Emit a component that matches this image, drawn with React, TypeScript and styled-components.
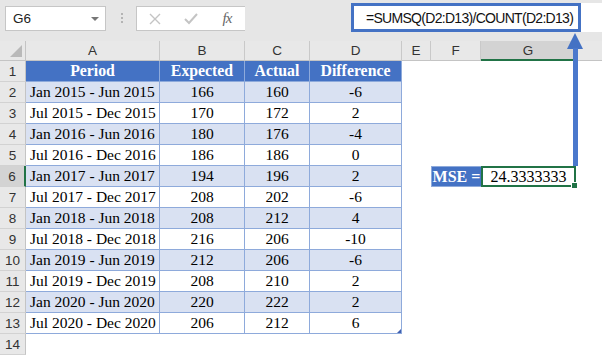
import React from 'react';
import styled, { createGlobalStyle, css } from 'styled-components';

const GlobalStyle = createGlobalStyle`
    html, body {
        margin: 0;
        padding: 0;
        background: #ffffff;
    }
    body {
        font-family: "Liberation Sans", Arial, sans-serif;
    }
`;

const SERIF = '"Times New Roman", "Liberation Serif", "DejaVu Serif", serif';
const BLUE = '#4472c4';
const LIGHT_BLUE = '#d9e1f2';
const TABLE_LINE = '#8eaadb';
const GREEN = '#217346';
const HEAD_BG = '#e8e8e8';

const Frame = styled.div`
    position: relative;
    width: 602px;
    height: 355px;
    overflow: hidden;
    background: #ffffff;
`;

const Toolbar = styled.div`
    display: flex;
    align-items: flex-start;
    height: 41px;
    background: #e6e6e6;
`;

const NameBox = styled.div`
    display: flex;
    align-items: center;
    justify-content: space-between;
    box-sizing: border-box;
    width: 101px;
    height: 25px;
    margin: 6px 0 0 5px;
    padding: 0 6px 0 7px;
    background: #ffffff;
    border: 1px solid #c6c6c6;
    font-size: 13.5px;
    color: #222;
`;

const Caret = styled.span`
    width: 0;
    height: 0;
    border-left: 4px solid transparent;
    border-right: 4px solid transparent;
    border-top: 4px solid #777;
`;

const Grip = styled.div`
    display: flex;
    flex-direction: column;
    gap: 2px;
    margin: 13px 0 0 15px;

    span {
        width: 2px;
        height: 2px;
        background: #b4b4b4;
    }
`;

const FuncBox = styled.div`
    display: flex;
    align-items: center;
    box-sizing: border-box;
    width: 109px;
    height: 25px;
    margin: 6px 0 0 13px;
    background: #ffffff;
    border: 1px solid #c6c6c6;
    border-right: none;
`;

const FuncIcon = styled.span<{ $dark?: boolean }>`
    display: flex;
    align-items: center;
    justify-content: center;
    width: 36px;
    color: ${(p) => (p.$dark ? '#666' : '#c4c4c4')};
`;

const Fx = styled.span`
    font-family: ${SERIF};
    font-style: italic;
    font-size: 15px;
    color: #666;
    letter-spacing: -1px;
`;

const FormulaBox = styled.div`
    display: flex;
    align-items: center;
    box-sizing: border-box;
    width: 230px;
    height: 29px;
    margin: 3px 0 0 106px;
    padding-left: 12px;
    background: #ffffff;
    border: 3px solid ${BLUE};
    font-size: 14px;
    letter-spacing: -0.7px;
    color: #111;
    white-space: nowrap;
`;

const FormulaRest = styled.div`
    flex: 1;
    height: 29px;
    margin-top: 3px;
    background: #ffffff;
`;

const Sheet = styled.div`
    display: grid;
    grid-template-columns: 26px 134px 85px 65px 92px 29px 50px 95px 64px;
    grid-template-rows: 20px repeat(14, 21px);
`;

const Corner = styled.div`
    position: relative;
    box-sizing: border-box;
    background: ${HEAD_BG};
    border-right: 1px solid #c4c4c4;
    border-bottom: 1px solid #c4c4c4;

    &::after {
        content: '';
        position: absolute;
        right: 3px;
        bottom: 3px;
        width: 0;
        height: 0;
        border-left: 12px solid transparent;
        border-bottom: 12px solid #b9b9b9;
    }
`;

const ColHead = styled.div<{ $selected?: boolean }>`
    display: flex;
    align-items: center;
    justify-content: center;
    box-sizing: border-box;
    background: ${(p) => (p.$selected ? '#d3d3d3' : HEAD_BG)};
    border-right: 1px solid #c9c9c9;
    border-bottom: ${(p) => (p.$selected ? `2px solid ${GREEN}` : '1px solid #c4c4c4')};
    font-size: 13.5px;
    color: #333;
`;

const RowHead = styled.div<{ $selected?: boolean }>`
    display: flex;
    align-items: center;
    justify-content: center;
    box-sizing: border-box;
    background: ${(p) => (p.$selected ? '#d3d3d3' : HEAD_BG)};
    border-right: ${(p) => (p.$selected ? `2px solid ${GREEN}` : '1px solid #c4c4c4')};
    border-bottom: 1px solid #d2d2d2;
    font-size: 13.5px;
    color: #333;
`;

type Variant = 'head' | 'even' | 'odd';

const Cell = styled.div<{ $variant: Variant; $left?: boolean }>`
    position: relative;
    display: flex;
    align-items: center;
    justify-content: ${(p) => (p.$left ? 'flex-start' : 'center')};
    box-sizing: border-box;
    padding-left: ${(p) => (p.$left ? '4px' : '0')};
    border-right: 1px solid ${TABLE_LINE};
    border-bottom: 1px solid ${TABLE_LINE};
    font-family: ${SERIF};
    font-weight: 400;
    font-size: 15.5px;
    white-space: nowrap;
    color: #000;
    ${(p) =>
        p.$variant === 'head' &&
        css`
            background: ${BLUE};
            color: #ffffff;
            font-weight: 700;
            font-size: 15.8px;
        `}
    ${(p) => p.$variant === 'even' && css`background: ${LIGHT_BLUE};`}
    ${(p) => p.$variant === 'odd' && css`background: #ffffff;`}
`;

const ResizeMark = styled.span`
    position: absolute;
    right: 0;
    bottom: 0;
    width: 0;
    height: 0;
    border-left: 4px solid transparent;
    border-bottom: 4px solid #3f5fb0;
`;

const Blank = styled.div``;

const MseLabel = styled.div`
    display: flex;
    align-items: center;
    justify-content: center;
    box-sizing: border-box;
    background: ${BLUE};
    border: 1px solid ${TABLE_LINE};
    border-right: none;
    font-family: ${SERIF};
    font-size: 16px;
    font-weight: 700;
    color: #ffffff;
    white-space: nowrap;
`;

const MseValue = styled.div`
    position: relative;
    display: flex;
    align-items: center;
    justify-content: center;
    box-sizing: border-box;
    border: 2px solid ${GREEN};
    font-family: ${SERIF};
    font-weight: 400;
    font-size: 16px;
    color: #000;
`;

const FillHandle = styled.span`
    position: absolute;
    right: -4px;
    bottom: -4px;
    width: 5px;
    height: 5px;
    background: ${GREEN};
    border: 1px solid #ffffff;
`;

const Arrow = styled.svg`
    position: absolute;
    left: 565px;
    top: 32px;
    pointer-events: none;
`;

const rows: [string, number, number, number][] = [
    ['Jan 2015 - Jun 2015', 166, 160, -6],
    ['Jul 2015 - Dec 2015', 170, 172, 2],
    ['Jan 2016 - Jun 2016', 180, 176, -4],
    ['Jul 2016 - Dec 2016', 186, 186, 0],
    ['Jan 2017 - Jun 2017', 194, 196, 2],
    ['Jul 2017 - Dec 2017', 208, 202, -6],
    ['Jan 2018 - Jun 2018', 208, 212, 4],
    ['Jul 2018 - Dec 2018', 216, 206, -10],
    ['Jan 2019 - Jun 2019', 212, 206, -6],
    ['Jul 2019 - Dec 2019', 208, 210, 2],
    ['Jan 2020 - Jun 2020', 220, 222, 2],
    ['Jul 2020 - Dec 2020', 206, 212, 6],
];

// H sits mostly off-screen, so its letter is not shown
const columns = ['A', 'B', 'C', 'D', 'E', 'F', 'G', ''];

const App: React.FC = () => {
    const sheetRows: React.ReactNode[] = [];

    for (let r = 1; r <= 14; r++) {
        const cells: React.ReactNode[] = [];
        const selectedRow = r === 6;
        cells.push(<RowHead key={`h${r}`} $selected={selectedRow}>{r}</RowHead>);

        if (r === 1) {
            cells.push(<Cell key="a" $variant="head">Period</Cell>);
            cells.push(<Cell key="b" $variant="head">Expected</Cell>);
            cells.push(<Cell key="c" $variant="head">Actual</Cell>);
            cells.push(<Cell key="d" $variant="head">Difference</Cell>);
        } else if (r <= 13) {
            const [period, expected, actual, diff] = rows[r - 2];
            const variant: Variant = r % 2 === 0 ? 'even' : 'odd';
            cells.push(<Cell key="a" $variant={variant} $left>{period}</Cell>);
            cells.push(<Cell key="b" $variant={variant}>{expected}</Cell>);
            cells.push(<Cell key="c" $variant={variant}>{actual}</Cell>);
            cells.push(
                <Cell key="d" $variant={variant}>
                    {diff}
                    {r === 13 && <ResizeMark />}
                </Cell>,
            );
        } else {
            ['a', 'b', 'c', 'd'].forEach((k) => cells.push(<Blank key={k} />));
        }

        cells.push(<Blank key="e" />);
        if (selectedRow) {
            cells.push(<MseLabel key="f">MSE =</MseLabel>);
            cells.push(
                <MseValue key="g">
                    24.3333333
                    <FillHandle />
                </MseValue>,
            );
        } else {
            cells.push(<Blank key="f" />);
            cells.push(<Blank key="g" />);
        }
        cells.push(<Blank key="h" />);

        sheetRows.push(<React.Fragment key={r}>{cells}</React.Fragment>);
    }

    return (
        <Frame>
            <GlobalStyle />
            <Toolbar>
                <NameBox>
                    G6
                    <Caret />
                </NameBox>
                <Grip>
                    <span />
                    <span />
                    <span />
                </Grip>
                <FuncBox>
                    <FuncIcon>
                        <svg width="12" height="12" viewBox="0 0 12 12">
                            <path d="M1 1 L11 11 M11 1 L1 11" stroke="currentColor" strokeWidth="1.4" />
                        </svg>
                    </FuncIcon>
                    <FuncIcon>
                        <svg width="14" height="12" viewBox="0 0 14 12">
                            <path d="M1 6 L5 10 L13 1" stroke="currentColor" strokeWidth="2" fill="none" />
                        </svg>
                    </FuncIcon>
                    <FuncIcon $dark>
                        <Fx>fx</Fx>
                    </FuncIcon>
                </FuncBox>
                <FormulaBox>=SUMSQ(D2:D13)/COUNT(D2:D13)</FormulaBox>
                <FormulaRest />
            </Toolbar>
            <Sheet>
                <Corner />
                {columns.map((c, i) => (
                    <ColHead key={i} $selected={c === 'G'}>
                        {c}
                    </ColHead>
                ))}
                {sheetRows}
            </Sheet>
            <Arrow width="20" height="135" viewBox="0 0 20 135">
                <polygon points="10,1 2,17 18,17" fill={BLUE} />
                <rect x="8" y="16" width="5" height="118" fill="#4a78cc" />
            </Arrow>
        </Frame>
    );
};

export default App;
